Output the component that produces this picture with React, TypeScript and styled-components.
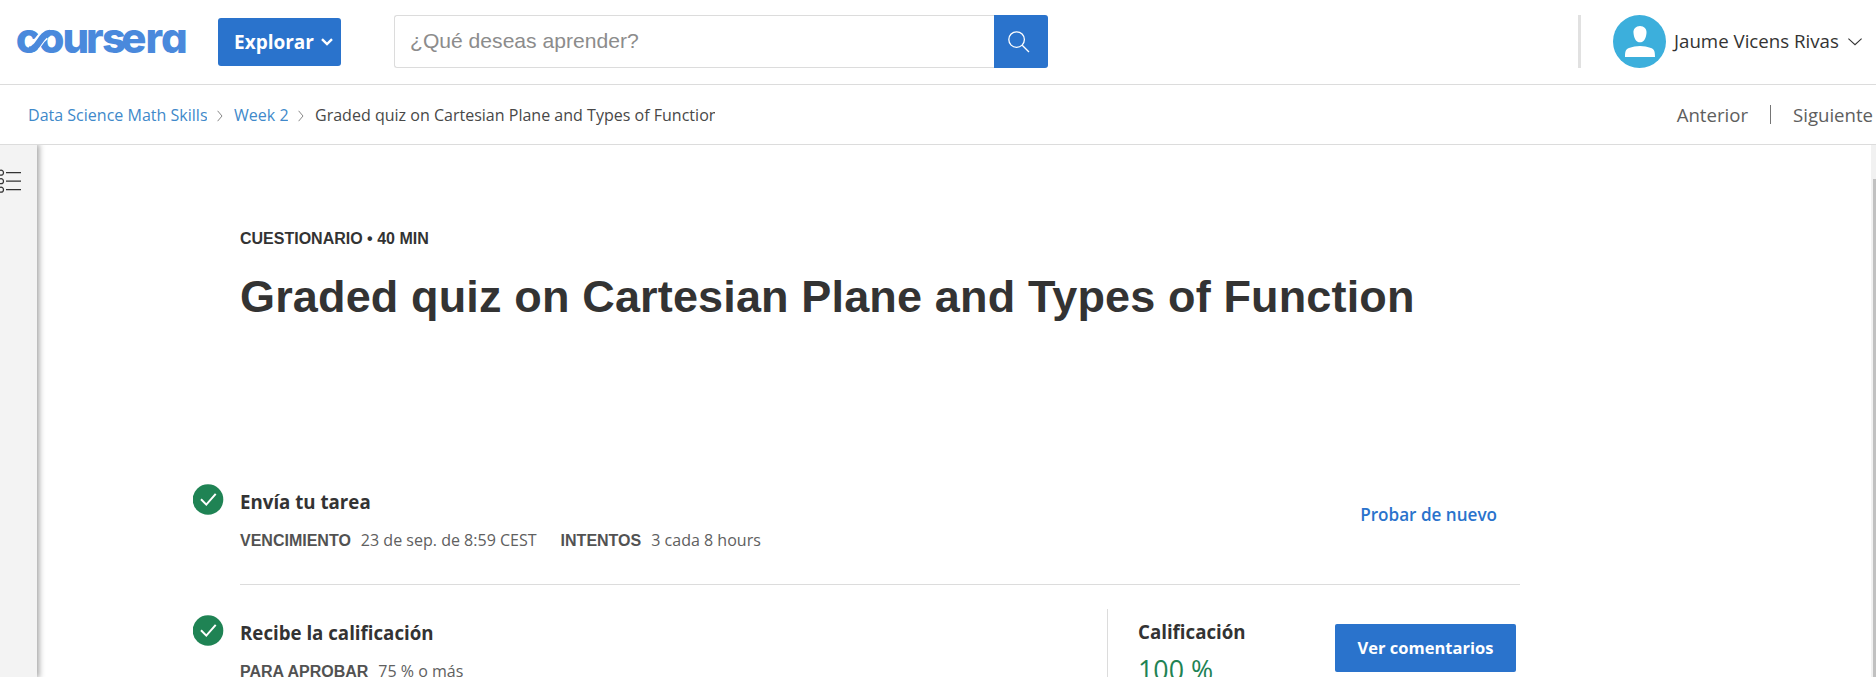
import React from "react";
import styled, { createGlobalStyle } from "styled-components";

const GlobalStyle = createGlobalStyle`
  * { box-sizing: border-box; }
  html, body { margin: 0; height: 100%; overflow: hidden; background: #fff; }
  body { font-family: "Open Sans", "Noto Sans", sans-serif; color: #333; }
  #root { height: 100%; }
  svg { display: block; flex: none; }
`;

const Page = styled.div`
  height: 677px;
  display: flex;
  flex-direction: column;
  overflow: hidden;
  white-space: nowrap;
`;

const Header = styled.header`
  flex: none;
  height: 85px;
  display: flex;
  align-items: flex-start;
  padding: 15px 14px 0 17px;
  border-bottom: 1px solid #dcdcdc;
`;

const LogoLink = styled.a`
  width: 171px;
  height: 30px;
  margin-top: 13px;
  svg { overflow: visible; }
`;

const ExploreButton = styled.button`
  width: 123px;
  height: 48px;
  margin: 3px 0 0 30px;
  padding: 0 8px 0 16px;
  display: flex;
  align-items: center;
  justify-content: space-between;
  border: 0;
  border-radius: 3px;
  background: #2a73cc;
  color: #fff;
  font: 700 19px "Open Sans", sans-serif;
`;

const Search = styled.div`
  display: flex;
  width: 654px;
  height: 53px;
  margin-left: 53px;
`;

const SearchField = styled.div`
  flex: 1;
  border: 1px solid #dcdcdc;
  border-right: 0;
  border-radius: 3px 0 0 3px;
  padding-left: 15px;
  font: 21.1px/50px "Liberation Sans", Arial, sans-serif;
  color: #8c8c8c;
`;

const SearchButton = styled.button`
  width: 54px;
  border: 0;
  padding: 0 0 0 14px;
  border-radius: 0 3px 3px 0;
  background: #2a73cc;
`;

const Account = styled.div`
  display: flex;
  align-items: center;
  height: 53px;
  margin-left: auto;
  padding-left: 32px;
  border-left: 3px solid #e1e1e1;
`;

const AccountName = styled.span`
  width: 165px;
  margin: 0 9px 1px 8px;
  font-size: 18.7px;
  line-height: 24px;
`;

const SubHeader = styled.nav`
  flex: none;
  height: 60px;
  display: flex;
  align-items: center;
  padding: 0 3px 0 28px;
  border-bottom: 1px solid #dcdcdc;
`;

const Crumb = styled.span<{ $w: number; $current?: boolean }>`
  width: ${(p) => p.$w}px;
  overflow: hidden;
  font-size: 16.05px;
  line-height: 24px;
  color: ${(p) => (p.$current ? "#484848" : "#4089ca")};
`;

const CrumbArrow = styled.svg`
  margin: 3px 11px 0 10px;
`;

const Pager = styled.div`
  display: flex;
  align-items: center;
  margin-left: auto;
  font-size: 18.6px;
  line-height: 24px;
  color: #5e5e5e;
`;

const PagerBar = styled.span`
  width: 1px;
  height: 19px;
  margin: 0 22px;
  background: #757575;
`;

const Body = styled.div`
  flex: 1;
  min-height: 0;
  display: flex;
`;

const Sidebar = styled.aside`
  flex: none;
  width: 37px;
  padding-top: 24px;
  background: #f3f3f3;
  box-shadow: 1px 0 6px 1px rgba(0, 0, 0, 0.38);
  clip-path: inset(0 -14px 0 0);
`;

const Main = styled.main`
  flex: 1;
  min-width: 0;
  padding: 82px 0 0 156px;
`;

const Kicker = styled.div`
  margin-left: 47px;
  font: 700 16px/24px "Liberation Sans", Arial, sans-serif;
`;

const Title = styled.h1`
  margin: 16px 0 0 47px;
  height: 60px;
  font: 700 45px/60px "Liberation Sans", Arial, sans-serif;
  letter-spacing: 0.15px;
`;

const Step = styled.section<{ $top: number }>`
  display: flex;
  align-items: flex-start;
  width: 1327px;
  margin-top: ${(p) => p.$top}px;
`;

const StepBody = styled.div<{ $ruled?: boolean }>`
  flex: 1;
  height: 101px;
  margin-left: 16px;
  display: flex;
  border-bottom: ${(p) => (p.$ruled ? "1px solid #dcdcdc" : "0")};
`;

const StepText = styled.div`
  flex: 1;
`;

const StepTitle = styled.h2`
  margin: 5px 0 0;
  font-size: 18.7px;
  font-weight: 700;
  line-height: 26px;
`;

const Facts = styled.div`
  display: flex;
  margin-top: 13px;
  font-size: 16.05px;
  line-height: 24px;
  color: #606060;
`;

const FactLabel = styled.b`
  margin-right: 10px;
  padding-top: 1px;
  color: #525252;
  font: 700 16px/24px "Liberation Sans", Arial, sans-serif;
`;

const FactValue = styled.span`
  margin-right: 24px;
`;

const RetryLink = styled.a`
  margin: 18px 23px 0 0;
  font-size: 17.1px;
  font-weight: 600;
  line-height: 26px;
  color: #2a73cc;
`;

const Grade = styled.div`
  width: 228px;
  height: 90px;
  margin-top: -6px;
  padding: 10px 0 0 30px;
  border-left: 1px solid #dcdcdc;
  font-size: 18.7px;
  font-weight: 700;
  line-height: 26px;
`;

const GradeValue = styled.div`
  margin-top: 6px;
  font-size: 26.8px;
  font-weight: 400;
  line-height: 38px;
  color: #1f8354;
`;

const FeedbackButton = styled.button`
  width: 181px;
  height: 48px;
  margin: 9px 4px 0 0;
  padding: 0 0 1px;
  border: 0;
  border-radius: 2px;
  background: #2a73cc;
  color: #fff;
  font: 700 16.5px "Open Sans", sans-serif;
`;

const ScrollTrack = styled.div`
  flex: none;
  width: 5px;
  padding: 34px 0 0 2px;
  background: #f1f1f1;
`;

const ScrollThumb = styled.div`
  height: 100%;
  background: #c1c1c1;
`;

function Logo() {
  return (
    <svg width="171" height="30" viewBox="17 27 171 30" fill="#4a89dc">
      <text
        x="15.8 38.5 62.6 86 102 121.3 145.5 160.9"
        y="51.5"
        fontFamily="Inter, sans-serif"
        fontWeight="800"
        fontSize="42"
        style={{ fontFeatureSettings: '"cv11"' }}
      >
        coursera
      </text>
      <path d="M35 45.500C39 40.500 40 37.500 45 34" fill="none" stroke="#fff" strokeWidth="10" />
      <path d="M29 48.800C39 48.800 40 32.500 50 32" fill="none" stroke="#4a89dc" strokeWidth="6.500" />
    </svg>
  );
}

function CheckBadge() {
  return (
    <svg width="31" height="31" viewBox="0 0 31 31">
      <circle cx="15" cy="15.5" r="15.3" fill="#1f8354" />
      <path d="M8 15.2L13.3 20.6L22.7 9.8" fill="none" stroke="#fff" strokeWidth="2" />
    </svg>
  );
}

function Arrow() {
  return (
    <CrumbArrow width="6" height="12" viewBox="0 0 6 12">
      <path d="M.6 .8L5 6L.6 11.2" fill="none" stroke="#888" strokeWidth="1" />
    </CrumbArrow>
  );
}

export default function App() {
  return (
    <Page>
      <GlobalStyle />
      <Header>
        <LogoLink><Logo /></LogoLink>
        <ExploreButton>
          Explorar
          <svg width="12" height="8" viewBox="0 0 12 8">
            <path d="M1 1.2L6 6L11 1.2" fill="none" stroke="#fff" strokeWidth="2.4" />
          </svg>
        </ExploreButton>
        <Search>
          <SearchField>¿Qué deseas aprender?</SearchField>
          <SearchButton>
            <svg width="22" height="22" viewBox="0 0 22 22" fill="none" stroke="#fff" strokeWidth="1.3">
              <circle cx="8.6" cy="8.6" r="7.8" />
              <path d="M14.2 14.2L21 21" />
            </svg>
          </SearchButton>
        </Search>
        <Account>
          <svg width="53" height="53" viewBox="0 0 53 53">
            <circle cx="26.5" cy="26.5" r="26.5" fill="#3cafdc" />
            <path d="M27 11C31 11 34 14 33.5 18C33 24 30.500 27.300 27 27.300S21 24 20.500 18C20 14 23 11 27 11Z" fill="#fff" />
            <path d="M12 42C12 37 12.500 34 16 33C23 30.300 31 30.300 38 33C41.500 34 42 37 42 42Z" fill="#fff" />
          </svg>
          <AccountName>Jaume Vicens Rivas</AccountName>
          <svg width="14" height="8" viewBox="0 0 14 8">
            <path d="M.4 .7L7 6.700L13.600 .7" fill="none" stroke="#333" strokeWidth="1.100" />
          </svg>
        </Account>
      </Header>
      <SubHeader>
        <Crumb $w={179}>Data Science Math Skills</Crumb>
        <Arrow />
        <Crumb $w={54}>Week 2</Crumb>
        <Arrow />
        <Crumb $w={400} $current>Graded quiz on Cartesian Plane and Types of Function</Crumb>
        <Pager>
          <span>Anterior</span>
          <PagerBar />
          <span>Siguiente</span>
        </Pager>
      </SubHeader>
      <Body>
        <Sidebar>
          <svg width="22" height="24" viewBox="0 0 22 24" fill="none" stroke="#333" strokeWidth="1.200">
            <circle cx="1" cy="3.700" r="2.500" />
            <circle cx="1" cy="12.200" r="2.500" />
            <circle cx="1" cy="20.700" r="2.500" />
            <path d="M6 3.700H21M6 12.200H21M6 20.700H21" />
          </svg>
        </Sidebar>
        <Main>
          <Kicker>CUESTIONARIO • 40 MIN</Kicker>
          <Title>Graded quiz on Cartesian Plane and Types of Function</Title>
          <Step $top={157}>
            <CheckBadge />
            <StepBody $ruled>
              <StepText>
                <StepTitle>Envía tu tarea</StepTitle>
                <Facts>
                  <FactLabel>VENCIMIENTO</FactLabel>
                  <FactValue>23 de sep. de 8:59 CEST</FactValue>
                  <FactLabel>INTENTOS</FactLabel>
                  <FactValue>3 cada 8 hours</FactValue>
                </Facts>
              </StepText>
              <RetryLink>Probar de nuevo</RetryLink>
            </StepBody>
          </Step>
          <Step $top={30}>
            <CheckBadge />
            <StepBody>
              <StepText>
                <StepTitle>Recibe la calificación</StepTitle>
                <Facts>
                  <FactLabel>PARA APROBAR</FactLabel>
                  <FactValue>75 % o más</FactValue>
                </Facts>
              </StepText>
              <Grade>
                Calificación
                <GradeValue>100 %</GradeValue>
              </Grade>
              <FeedbackButton>Ver comentarios</FeedbackButton>
            </StepBody>
          </Step>
        </Main>
        <ScrollTrack><ScrollThumb /></ScrollTrack>
      </Body>
    </Page>
  );
}
